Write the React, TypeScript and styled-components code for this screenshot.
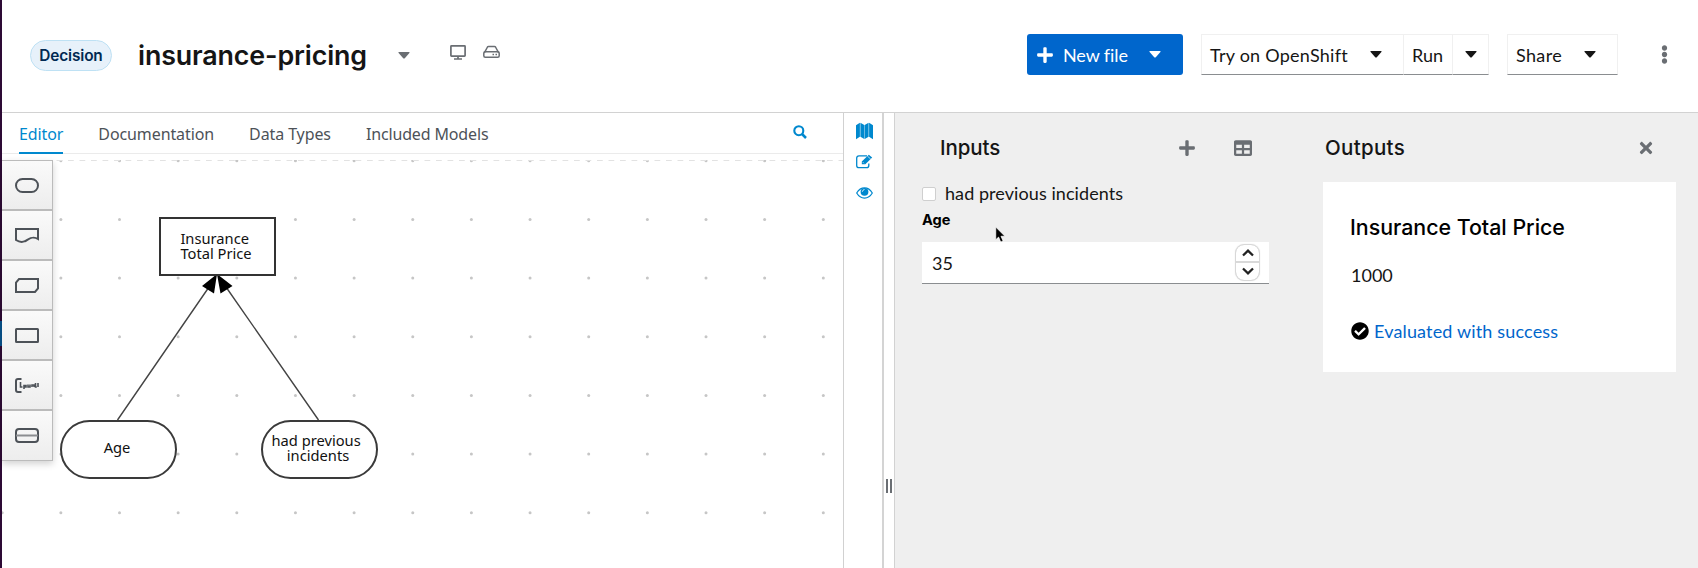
import React from "react";
import styled, { createGlobalStyle } from "styled-components";
import { FaPlus, FaTable, FaTimes, FaCheckCircle, FaEllipsisV } from "react-icons/fa";

const GlobalStyle = createGlobalStyle`
  * { box-sizing: border-box; }
  body {
    margin: 0;
    background: #fff;
    color: #151515;
    font-family: Lato, "Liberation Sans", sans-serif;
    font-size: 18px;
  }
  button { font: inherit; color: inherit; background: none; border: 0; padding: 0; }
  svg { display: block; flex: none; }
`;

const Page = styled.div`
  display: flex;
  width: 1698px;
  height: 568px;
  overflow: hidden;
`;

const DesktopEdge = styled.div`
  width: 2px;
  flex: none;
  background: linear-gradient(#2d0a35 0 321px, #07528c 321px 346px, #2d0a35 346px);
`;

const Main = styled.div`
  flex: 1;
  min-width: 0;
  display: flex;
  flex-direction: column;
`;

const Header = styled.header`
  height: 113px;
  flex: none;
  display: flex;
  align-items: flex-start;
  border-bottom: 1px solid #d2d2d2;
`;

const FileType = styled.span`
  width: 82px;
  height: 31px;
  margin: 40px 0 0 28px;
  border: 1px solid #bee1f4;
  border-radius: 16px;
  background: #e7f1fa;
  color: #002952;
  font: 600 15.4px/29px Inter, sans-serif;
  letter-spacing: -0.15px;
  text-align: center;
`;

const FileName = styled.h1`
  width: 229px;
  margin: 34px 0 0 26px;
  font: 600 26.8px/42px Inter, sans-serif;
  letter-spacing: -0.12px;
  white-space: nowrap;
`;

const CaretShape = styled.svg<{ $gap?: number }>`
  margin-left: ${(p) => p.$gap ?? 0}px;
`;

const NameCaret = styled.span`
  color: #6a6e73;
  margin: 52px 0 0 31px;
`;

const StorageIcons = styled.div`
  display: flex;
  gap: 17px;
  margin: 45px 0 0 40px;
`;

const Actions = styled.div`
  display: flex;
  align-items: center;
  margin: 34px 24px 0 auto;
  height: 41px;
`;

const PrimaryButton = styled.button`
  display: flex;
  align-items: center;
  width: 156px;
  height: 41px;
  padding-left: 9px;
  border-radius: 3px;
  background: #06c;
  color: #fff;
`;

const ButtonText = styled.span<{ $track?: number; $gap?: number }>`
  margin-left: ${(p) => p.$gap ?? 0}px;
  letter-spacing: ${(p) => p.$track ?? 0}px;
  white-space: nowrap;
`;

const ButtonGroup = styled.div`
  display: flex;
  margin-left: 18px;
`;

const OutlineButton = styled.button<{ $width: number; $pad?: number }>`
  display: flex;
  align-items: center;
  width: ${(p) => p.$width}px;
  height: 41px;
  padding-left: ${(p) => p.$pad ?? 8}px;
  border: 1px solid #f0f0f0;
  border-bottom-color: #8a8d90;
  & + & { border-left: 0; }
`;

const KebabButton = styled.button`
  width: 19px;
  margin-left: 37px;
  color: #6a6e73;
`;

const Body = styled.div`
  flex: 1;
  min-height: 0;
  display: flex;
`;

const Editor = styled.section`
  width: 842px;
  flex: none;
  display: flex;
  flex-direction: column;
  border-right: 1px solid #d1d1d1;
`;

const TabBar = styled.nav`
  height: 41px;
  flex: none;
  display: flex;
  align-items: stretch;
  gap: 35px;
  padding-left: 17px;
  border-bottom: 1px solid #ebebeb;
  font: 16px/42px "Noto Sans", sans-serif;
  color: #4d5258;
`;

const Tab = styled.a<{ $active?: boolean; $track?: number }>`
  height: 41px;
  white-space: nowrap;
  letter-spacing: ${(p) => p.$track ?? -0.1}px;
  color: ${(p) => (p.$active ? "#0088ce" : "inherit")};
  box-shadow: ${(p) => (p.$active ? "inset 0 -2px #0088ce" : "none")};
`;

const SearchButton = styled.button`
  margin: 12px 36px 0 auto;
  align-self: flex-start;
`;

const Canvas = styled.div`
  position: relative;
  flex: 1;
  margin-top: 6px;
`;

const Backdrop = styled.svg`
  width: 841px;
  height: 408px;
`;

const Palette = styled.div`
  position: absolute;
  left: 0;
  top: 0;
  width: 51px;
  border: 1px solid #bbb;
  border-width: 1px 1px 1px 0;
  box-shadow: 0 3px 7px rgba(3, 3, 3, 0.18);
`;

const PaletteButton = styled.button`
  display: flex;
  align-items: center;
  justify-content: center;
  width: 50px;
  height: 50px;
  padding-right: 1px;
  background: linear-gradient(#fafafa, #ededed);
  &:not(:last-child) { border-bottom: 2px solid #bbb; }
  &:last-child { height: 49px; }
`;

const Node = styled.div<{ $x: number; $y: number; $round?: boolean }>`
  position: absolute;
  left: ${(p) => p.$x}px;
  top: ${(p) => p.$y}px;
  width: 117px;
  height: 59px;
  display: flex;
  align-items: center;
  justify-content: center;
  padding: ${(p) => (p.$round ? "0 3px 4px 0" : "0 3px 2px 0")};
  border: 2px solid ${(p) => (p.$round ? "#3a3a3a" : "#333")};
  border-radius: ${(p) => (p.$round ? 30 : 0)}px;
  background: #fff;
  color: #111;
  font: 14.7px/15px "Noto Sans", sans-serif;
  text-align: center;
`;

const NodeText = styled.span<{ $left?: boolean }>`
  text-align: ${(p) => (p.$left ? "left" : "center")};
  white-space: pre;
`;

const Dock = styled.aside`
  width: 40px;
  flex: none;
  display: flex;
  flex-direction: column;
  align-items: center;
  padding: 9px 0 0 3px;
  border-right: 2px solid #d4d4d4;
  color: #0088ce;
`;

const DockButton = styled.button<{ $height: number }>`
  display: flex;
  align-items: center;
  height: ${(p) => p.$height}px;
`;

const Splitter = styled.div`
  width: 11px;
  flex: none;
  display: flex;
  justify-content: center;
  gap: 2px;
  padding: 366px 1px 0 0;
  border-right: 1px solid #d2d2d2;
`;

const Grip = styled.i`
  width: 2px;
  height: 14px;
  background: #6a6e73;
`;

const Runner = styled.section`
  flex: 1;
  min-width: 0;
  display: flex;
  background: #efefef;
`;

const InputsPanel = styled.div`
  width: 374px;
  margin-left: 27px;
`;

const PanelHeader = styled.div<{ $inset: number }>`
  display: flex;
  align-items: center;
  height: 68px;
  padding: 1px 0 0 ${(p) => p.$inset}px;
  color: #6a6e73;
`;

const PanelTitle = styled.h2<{ $track: number }>`
  margin: 0 auto 0 0;
  font: 500 20.5px/28px Inter, sans-serif;
  letter-spacing: ${(p) => p.$track}px;
  color: #151515;
`;

const AddButton = styled.button`
  margin-right: 38px;
`;

const TableButton = styled.button`
  margin-right: 44px;
`;

const CloseButton = styled.button`
  margin-right: 21px;
`;

const CheckRow = styled.label`
  display: flex;
  align-items: center;
  gap: 9px;
  height: 26px;
  letter-spacing: 0.07px;
`;

const CheckText = styled.span`
  padding-bottom: 2px;
`;

const Checkbox = styled.span`
  width: 14px;
  height: 14px;
  border: 1px solid #cfcfcf;
  border-radius: 2px;
  background: #fff;
`;

const FieldLabel = styled.div`
  height: 35px;
  padding-top: 2px;
  font: 700 14.6px/22px Inter, sans-serif;
  color: #000;
`;

const NumberField = styled.div`
  display: flex;
  align-items: center;
  justify-content: space-between;
  width: 347px;
  height: 42px;
  padding: 0 10px;
  background: #fff;
  border-bottom: 1px solid #8a8d90;
`;

const Spinner = styled.div`
  display: flex;
  flex-direction: column;
  width: 23px;
  height: 35px;
  margin-top: -1px;
  border-radius: 8px;
  box-shadow: 0 0 0 1px #d8d8d8, 0 0 2px rgba(0, 0, 0, 0.3);
`;

const Step = styled.button`
  flex: 1;
  display: flex;
  align-items: center;
  justify-content: center;
  & + & { border-top: 2px solid #d9d9d9; }
`;

const OutputsPanel = styled.div`
  width: 353px;
  margin-left: 27px;
`;

const ResultCard = styled.article`
  height: 190px;
  margin-top: 1px;
  padding: 28px 0 0 28px;
  background: #fff;
  color: #000;
`;

const ResultName = styled.h3`
  margin: 0 0 0 -1px;
  font: 500 21.4px/34px Inter, sans-serif;
  letter-spacing: -0.02px;
`;

const ResultValue = styled.div`
  margin-top: 16px;
  line-height: 30px;
  color: #151515;
`;

const ResultStatus = styled.div`
  display: flex;
  align-items: center;
  gap: 5px;
  height: 30px;
  margin-top: 26px;
`;

const StatusLink = styled.a`
  color: #06c;
  letter-spacing: 0.16px;
`;

const Pointer = styled.svg`
  position: absolute;
  left: 994px;
  top: 226px;
`;

const shapes = [
  <rect x="1" y="1" width="22" height="13" rx="6.5" />,
  <path d="M1 1h22v10c-6-4-10 1-13 2.200C7 14.500 4 14 1 12z" />,
  <path d="M4 1h19v9.500l-3 3.500H1V4.500z" />,
  <rect x="1" y="1" width="22" height="13" rx="0.5" />,
  <>
    <path d="M6.500 1H3Q1 1 1 3v9q0 2 2 2h3.500" />
    <path d="M5.500 4v5h2M9 11V7.500h2V9H9M13 6.500V9h2V6.500M17 9V7h2v2M20.500 5v4h1.300M23 5v4" strokeWidth="1.600" />
  </>,
  <>
    <rect x="1" y="1" width="22" height="13" rx="3" />
    <path d="M1 7.500h22" stroke="#8b8d90" />
  </>,
];

const PITCH = 58.65;
const cols = Array.from({ length: 15 }, (_, i) => i * PITCH);
const rows = Array.from({ length: 7 }, (_, i) => i * PITCH);

const CanvasBackdrop = () => (
  <Backdrop viewBox="0 0 841 408">
    {rows.map((y) =>
      cols.map((x) => <circle key={`${x}-${y}`} cx={x + 0.2} cy={y + 0.8} r="1.5" fill="#c6c6c6" />),
    )}
    <path d="M-3 0.500H841" stroke="#e2e2e2" strokeDasharray="5.750 5.750" />
    <g stroke="#444" strokeWidth="1.400">
      <path d="M115.500 260L207 127M316.500 260L224 127" />
    </g>
    <path d="M215 114l-15 12 12 7.500zM215 114l15.500 12-12 7.500z" fill="#000" />
  </Backdrop>
);

const Caret = ({ $gap }: { $gap?: number }) => (
  <CaretShape $gap={$gap} width="12" height="7" viewBox="0 0 12 7" fill="currentColor">
    <path d="M1 0h10q1 0 0.400 0.900L6.800 6.200q-0.800 0.800-1.600 0L0.600 0.900Q0 0 1 0z" />
  </CaretShape>
);

const MonitorIcon = () => (
  <svg width="16" height="15" viewBox="0 0 16 15" fill="none" stroke="#6a6e73" strokeWidth="1.700">
    <rect x="0.900" y="0.900" width="14.200" height="10.200" rx="0.600" />
    <path d="M8 11v2.500M4 14h8" />
  </svg>
);

const DriveIcon = () => (
  <svg width="17" height="15" viewBox="0 0 17 15" fill="none" stroke="#6a6e73" strokeWidth="1.500">
    <path d="M1.300 7.800L4.500 2q0.300-0.500 1-0.500h6q0.700 0 1 0.500L15.700 7.800" />
    <rect x="0.800" y="6.800" width="15.400" height="5.500" rx="1.500" />
    <path d="M9.500 9.600H11M12.500 9.600H14" />
  </svg>
);

const SearchIcon = () => (
  <svg width="14" height="14" viewBox="0 0 14 14" fill="none" stroke="#0088ce" strokeWidth="2.100">
    <circle cx="5.800" cy="5.700" r="4.500" />
    <path d="M9 9l4 4" strokeWidth="2.500" />
  </svg>
);

const MapIcon = () => (
  <svg width="17" height="18" viewBox="0 0 17 18" fill="#0088ce">
    <path d="M0 3.200L3.900 0.700v14.100L0 17.300zM4.400 0.700l3.900 2.200V17l-3.900-2.200zM8.700 2.900l3.900-2.200v14.100L8.700 17zM13.100 0.700L17 3.200v14.100l-3.900-2.500z" />
  </svg>
);

const EditIcon = () => (
  <svg width="17" height="15" viewBox="0 0 17 15" fill="none" stroke="#0088ce" strokeWidth="1.300">
    <path d="M11 1.800H3Q0.700 1.800 0.700 4v7.500q0 2.200 2.300 2.200h7.500q2.300 0 2.300-2.200V9.500" />
    <path d="M5.800 10.200V7.500L12.800 0.700l3.400 2.900-6.900 6.600z" fill="#0088ce" stroke="none" />
    <path d="M6.900 8.200l1 1M11.500 2.200l3.200 2.800" stroke="#fff" strokeWidth="0.700" />
  </svg>
);

const EyeIcon = () => (
  <svg width="17" height="12" viewBox="0 0 17 12" fill="none" stroke="#0088ce" strokeWidth="1.200">
    <path d="M0.700 6Q3.700 0.900 8.500 0.900T16.300 6Q13.300 11.100 8.500 11.100T0.700 6z" />
    <circle cx="8.500" cy="4.800" r="3.900" fill="#0088ce" stroke="none" />
    <path d="M6.300 4.800Q6.500 2.700 8.500 2.500" stroke="#fff" strokeWidth="0.800" />
  </svg>
);

const Chevron = ({ up }: { up?: boolean }) => (
  <svg width="12" height="8" viewBox="0 0 12 8" fill="none" stroke="#222" strokeWidth="2.300">
    <path d={up ? "M1 6.500l5-4.800 5 4.800" : "M1 1.500l5 4.800 5-4.800"} />
  </svg>
);

export default function App() {
  return (
    <>
      <GlobalStyle />
      <Page>
        <DesktopEdge />
        <Main>
          <Header>
            <FileType>Decision</FileType>
            <FileName>insurance-pricing</FileName>
            <NameCaret>
              <Caret />
            </NameCaret>
            <StorageIcons>
              <MonitorIcon />
              <DriveIcon />
            </StorageIcons>
            <Actions>
              <PrimaryButton>
                <FaPlus size={18} />
                <ButtonText $track={-0.1} $gap={9}>New file</ButtonText>
                <Caret $gap={21} />
              </PrimaryButton>
              <ButtonGroup>
                <OutlineButton $width={203}>
                  <ButtonText $track={0.25}>Try on OpenShift</ButtonText>
                  <Caret $gap={22} />
                </OutlineButton>
                <OutlineButton $width={49}>
                  <ButtonText>Run</ButtonText>
                </OutlineButton>
                <OutlineButton $width={36} $pad={12}>
                  <Caret />
                </OutlineButton>
              </ButtonGroup>
              <ButtonGroup>
                <OutlineButton $width={111}>
                  <ButtonText $track={0.35}>Share</ButtonText>
                  <Caret $gap={22} />
                </OutlineButton>
              </ButtonGroup>
              <KebabButton>
                <FaEllipsisV size={19} />
              </KebabButton>
            </Actions>
          </Header>
          <Body>
            <Editor>
              <TabBar>
                <Tab $active>Editor</Tab>
                <Tab>Documentation</Tab>
                <Tab>Data Types</Tab>
                <Tab $track={-0.15}>Included Models</Tab>
                <SearchButton>
                  <SearchIcon />
                </SearchButton>
              </TabBar>
              <Canvas>
                <CanvasBackdrop />
                <Node $x={157} $y={57}>
                  <NodeText $left>{"Insurance\nTotal Price"}</NodeText>
                </Node>
                <Node $x={58} $y={260} $round>
                  <NodeText>Age</NodeText>
                </Node>
                <Node $x={259} $y={260} $round>
                  <NodeText>{"had previous \nincidents"}</NodeText>
                </Node>
                <Palette>
                  {shapes.map((shape, i) => (
                    <PaletteButton key={i}>
                      <svg width="24" height="15" viewBox="0 0 24 15" fill="none" stroke="#4d5258" strokeWidth="2">
                        {shape}
                      </svg>
                    </PaletteButton>
                  ))}
                </Palette>
              </Canvas>
            </Editor>
            <Dock>
              <DockButton $height={18}>
                <MapIcon />
              </DockButton>
              <DockButton $height={43}>
                <EditIcon />
              </DockButton>
              <DockButton $height={20}>
                <EyeIcon />
              </DockButton>
            </Dock>
            <Splitter>
              <Grip />
              <Grip />
            </Splitter>
            <Runner>
              <InputsPanel>
                <PanelHeader $inset={18}>
                  <PanelTitle $track={-0.1}>Inputs</PanelTitle>
                  <AddButton>
                    <FaPlus size={18} />
                  </AddButton>
                  <TableButton>
                    <FaTable size={18} />
                  </TableButton>
                </PanelHeader>
                <CheckRow>
                  <Checkbox />
                  <CheckText>had previous incidents</CheckText>
                </CheckRow>
                <FieldLabel>Age</FieldLabel>
                <NumberField>
                  35
                  <Spinner>
                    <Step>
                      <Chevron up />
                    </Step>
                    <Step>
                      <Chevron />
                    </Step>
                  </Spinner>
                </NumberField>
              </InputsPanel>
              <OutputsPanel>
                <PanelHeader $inset={2}>
                  <PanelTitle $track={0.3}>Outputs</PanelTitle>
                  <CloseButton>
                    <FaTimes size={18} />
                  </CloseButton>
                </PanelHeader>
                <ResultCard>
                  <ResultName>Insurance Total Price</ResultName>
                  <ResultValue>1000</ResultValue>
                  <ResultStatus>
                    <FaCheckCircle size={18} />
                    <StatusLink>Evaluated with success</StatusLink>
                  </ResultStatus>
                </ResultCard>
              </OutputsPanel>
            </Runner>
          </Body>
        </Main>
        <Pointer width="13" height="18" viewBox="0 0 12 17">
          <path d="M1.500 1v12l2.700-2.500 2 4.700 2.300-1-2-4.500h3.700z" fill="#000" stroke="#fff" strokeWidth="0.700" />
        </Pointer>
      </Page>
    </>
  );
}
